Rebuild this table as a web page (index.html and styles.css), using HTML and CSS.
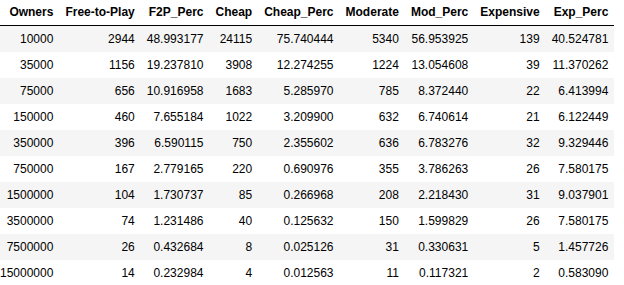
FILE: index.html
```html
<!DOCTYPE html>
<html lang="en">

<head>
    <meta charset="UTF-8">
    <meta name="viewport" content="width=device-width, initial-scale=1.0">
    <title>Owners</title>
    <link rel="stylesheet" href="styles.css">
</head>

<body>
    <div class="output">
        <table class="dataframe">
            <thead>
                <tr>
                    <th>Owners</th>
                    <th>Free-to-Play</th>
                    <th>F2P_Perc</th>
                    <th>Cheap</th>
                    <th>Cheap_Perc</th>
                    <th>Moderate</th>
                    <th>Mod_Perc</th>
                    <th>Expensive</th>
                    <th>Exp_Perc</th>
                </tr>
            </thead>
            <tbody>
                <tr>
                    <td>10000</td><td>2944</td><td>48.993177</td><td>24115</td><td>75.740444</td>
                    <td>5340</td><td>56.953925</td><td>139</td><td>40.524781</td>
                </tr>
                <tr>
                    <td>35000</td><td>1156</td><td>19.237810</td><td>3908</td><td>12.274255</td>
                    <td>1224</td><td>13.054608</td><td>39</td><td>11.370262</td>
                </tr>
                <tr>
                    <td>75000</td><td>656</td><td>10.916958</td><td>1683</td><td>5.285970</td>
                    <td>785</td><td>8.372440</td><td>22</td><td>6.413994</td>
                </tr>
                <tr>
                    <td>150000</td><td>460</td><td>7.655184</td><td>1022</td><td>3.209900</td>
                    <td>632</td><td>6.740614</td><td>21</td><td>6.122449</td>
                </tr>
                <tr>
                    <td>350000</td><td>396</td><td>6.590115</td><td>750</td><td>2.355602</td>
                    <td>636</td><td>6.783276</td><td>32</td><td>9.329446</td>
                </tr>
                <tr>
                    <td>750000</td><td>167</td><td>2.779165</td><td>220</td><td>0.690976</td>
                    <td>355</td><td>3.786263</td><td>26</td><td>7.580175</td>
                </tr>
                <tr>
                    <td>1500000</td><td>104</td><td>1.730737</td><td>85</td><td>0.266968</td>
                    <td>208</td><td>2.218430</td><td>31</td><td>9.037901</td>
                </tr>
                <tr>
                    <td>3500000</td><td>74</td><td>1.231486</td><td>40</td><td>0.125632</td>
                    <td>150</td><td>1.599829</td><td>26</td><td>7.580175</td>
                </tr>
                <tr>
                    <td>7500000</td><td>26</td><td>0.432684</td><td>8</td><td>0.025126</td>
                    <td>31</td><td>0.330631</td><td>5</td><td>1.457726</td>
                </tr>
                <tr>
                    <td>15000000</td><td>14</td><td>0.232984</td><td>4</td><td>0.012563</td>
                    <td>11</td><td>0.117321</td><td>2</td><td>0.583090</td>
                </tr>
            </tbody>
        </table>
    </div>
</body>

</html>
```

FILE: styles.css
```css
html,
body {
    margin: 0;
    padding: 0;
    background: #fff;
}

.output {
    margin-left: -6px;
    margin-top: -1px;
}

.dataframe {
    border: none;
    border-collapse: collapse;
    border-spacing: 0;
    color: #000;
    font-family: "Liberation Sans", Arial, sans-serif;
    font-size: 12px;
}

.dataframe thead {
    border-bottom: 1px solid #000;
    vertical-align: bottom;
}

.dataframe th,
.dataframe td {
    text-align: right;
    vertical-align: middle;
    padding: 0.5em 0.5em;
    line-height: normal;
    white-space: nowrap;
    border: none;
}

.dataframe th {
    font-weight: bold;
}

.dataframe tbody tr:nth-child(odd) {
    background: #f5f5f5;
}
```
